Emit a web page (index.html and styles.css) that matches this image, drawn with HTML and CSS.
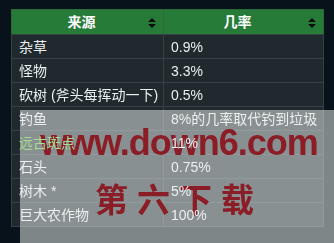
FILE: index.html
```html
<!DOCTYPE html>
<html lang="zh">
<head>
<meta charset="utf-8">
<link rel="stylesheet" href="styles.css">
</head>
<body>
<table class="drop-table">
  <thead>
    <tr>
      <th class="col-src"><span class="th-label">来源</span><span class="sort"></span></th>
      <th class="col-rate"><span class="th-label">几率</span><span class="sort"></span></th>
    </tr>
  </thead>
  <tbody>
    <tr><td><span class="cell">杂草</span></td><td><span class="cell">0.9%</span></td></tr>
    <tr><td><span class="cell">怪物</span></td><td><span class="cell">3.3%</span></td></tr>
    <tr><td><span class="cell">砍树 (斧头每挥动一下)</span></td><td><span class="cell">0.5%</span></td></tr>
    <tr><td><span class="cell">钓鱼</span></td><td><span class="cell">8%的几率取代钓到垃圾</span></td></tr>
    <tr><td><span class="cell link">远古斑点</span></td><td><span class="cell">11%</span></td></tr>
    <tr><td><span class="cell">石头</span></td><td><span class="cell">0.75%</span></td></tr>
    <tr><td><span class="cell">树木 *</span></td><td><span class="cell">5%</span></td></tr>
    <tr><td><span class="cell">巨大农作物</span></td><td><span class="cell">100%</span></td></tr>
  </tbody>
</table>
<div class="watermark">
  <div class="wm-url">www.down6.com</div>
  <div class="wm-name"><span>第</span><span>六</span><span>下</span><span>载</span></div>
</div>
</body>
</html>
```
FILE: styles.css
```css
html, body {
  margin: 0;
  padding: 0;
  background: #08121a;
  width: 334px;
  height: 243px;
  overflow: hidden;
}
body {
  padding: 9px 0 0 11px;
  box-sizing: border-box;
  font-family: "Liberation Sans", "Noto Sans CJK SC", sans-serif;
  font-size: 14px;
  color: #eceff0;
}
.drop-table {
  border-collapse: collapse;
  table-layout: fixed;
  width: 312px;
  background: #1f292e;
}
.col-src { width: 152px; }
.col-rate { width: 160px; }
.drop-table th,
.drop-table td {
  border: 1px solid #384246;
  height: 24px;
  padding: 0 0 0 7px;
  box-sizing: border-box;
  white-space: nowrap;
  line-height: 16px;
}
.drop-table th {
  background: #267b39;
  border-color: #2c6a3a;
  border-bottom-color: #384246;
  color: #ffffff;
  font-weight: bold;
  text-align: center;
  padding: 0 19px 0 7px;
  position: relative;
  height: 25px;
}
.drop-table td {
  text-align: left;
  vertical-align: middle;
}
.cell {
  position: relative;
  z-index: 2;
}
.sort {
  position: absolute;
  right: 7px;
  top: 8px;
  width: 8px;
  height: 10px;
}
.sort::before,
.sort::after {
  content: "";
  position: absolute;
  left: 0;
  border-left: 4px solid transparent;
  border-right: 4px solid transparent;
}
.sort::before {
  top: 0;
  border-bottom: 4px solid #0a0f0c;
}
.sort::after {
  bottom: 0;
  border-top: 4px solid #0a0f0c;
}
.link {
  color: #a3dc92;
}
.watermark {
  position: fixed;
  z-index: 1;
  left: 20px;
  top: 110px;
  right: 0;
  bottom: 0;
  background: rgba(213, 218, 217, 0.58);
  padding: 15px 0 0 20px;
  box-sizing: border-box;
  color: #8b1d26;
  pointer-events: none;
}
.wm-url {
  font-family: "Liberation Sans", sans-serif;
  font-weight: bold;
  font-size: 36px;
  line-height: 36px;
  letter-spacing: -1px;
  white-space: nowrap;
}
.wm-name {
  display: flex;
  gap: 9px;
  font-family: "Noto Sans CJK SC", sans-serif;
  font-weight: bold;
  font-size: 33px;
  line-height: 34px;
  margin: 20px 0 0 55px;
  white-space: nowrap;
}
```
